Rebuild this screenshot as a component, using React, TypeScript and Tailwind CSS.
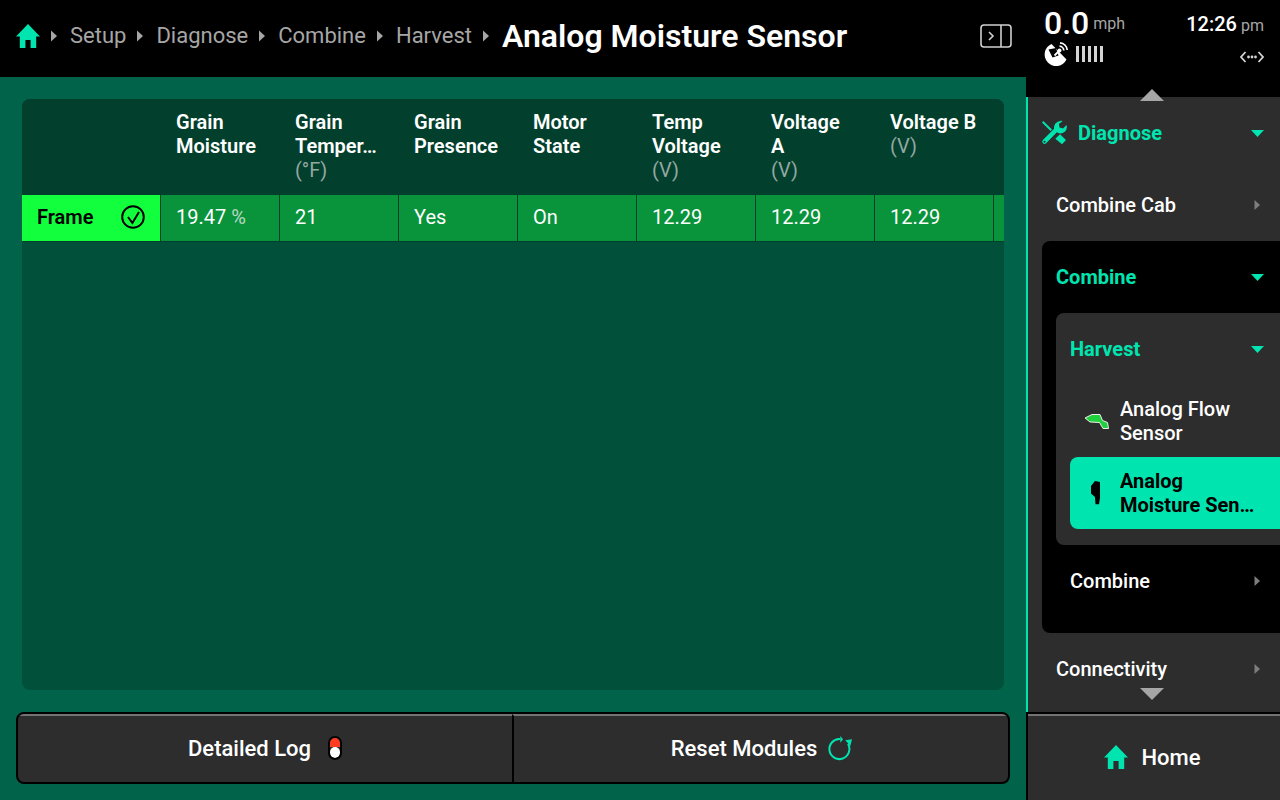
const TEAL = "#00e5b0";

function Caret() {
  return (
    <svg width="8" height="14" viewBox="0 0 8 14" className="shrink-0">
      <path d="M1 1.500 7 7l-6 5.500z" fill="#a6a6a6" />
    </svg>
  );
}

function HomeIcon({ size = 26 }: { size?: number }) {
  return (
    <svg width={size} height={size} viewBox="0 0 26 26">
      <path d="M13 1 25 13.500h-3.800V25h-5.600v-8h-5.200v8H4.800V13.500H1z" fill={TEAL} />
    </svg>
  );
}

function SideCaret() {
  return (
    <svg width="6" height="10" viewBox="0 0 6 10">
      <path d="M.5 0 6 5 .5 10z" fill="#7d7d7d" />
    </svg>
  );
}

function TealDown() {
  return (
    <svg width="13" height="7" viewBox="0 0 13 7">
      <path d="M0 0h13L6.500 7z" fill={TEAL} />
    </svg>
  );
}

const columns = [
  { title: ["Grain", "Moisture"], unit: "", value: "19.47", suffix: "%" },
  { title: ["Grain", "Temper…"], unit: "(°F)", value: "21", suffix: "" },
  { title: ["Grain", "Presence"], unit: "", value: "Yes", suffix: "" },
  { title: ["Motor", "State"], unit: "", value: "On", suffix: "" },
  { title: ["Temp", "Voltage"], unit: "(V)", value: "12.29", suffix: "" },
  { title: ["Voltage", "A"], unit: "(V)", value: "12.29", suffix: "" },
  { title: ["Voltage B"], unit: "(V)", value: "12.29", suffix: "" },
];

function Breadcrumbs() {
  return (
    <div className="flex h-[77px] items-center bg-black pb-[5px] pl-[15px] pr-[14px]">
      <div className="mr-[-1px]">
        <HomeIcon />
      </div>
      {["Setup", "Diagnose", "Combine", "Harvest"].map((label) => (
        <div key={label} className="flex items-center">
          <div className="ml-[10px] mr-[12px]">
            <Caret />
          </div>
          <span className="text-[22px] leading-none text-[#a6a6a6]">{label}</span>
        </div>
      ))}
      <div className="ml-[10px] mr-[12px]">
        <Caret />
      </div>
      <span className="text-[32px] font-semibold leading-none text-white">Analog Moisture Sensor</span>
      <svg width="32" height="24" viewBox="0 0 32 24" className="ml-auto">
        <rect x="1" y="1" width="30" height="22" rx="3" fill="none" stroke="#cfcfcf" strokeWidth="1.600" />
        <path d="M21 1v22" stroke="#cfcfcf" strokeWidth="1.600" />
        <path d="m9 8 4 4-4 4" fill="none" stroke="#cfcfcf" strokeWidth="1.600" />
      </svg>
    </div>
  );
}

function DataTable() {
  return (
    <div className="h-[591px] overflow-hidden rounded-lg bg-[#00503a]">
      <div className="flex h-[96px] bg-[#023f2d]">
        <div className="w-[139px] shrink-0" />
        {columns.map((col) => (
          <div key={col.title.join(" ")} className="w-[119px] shrink-0 pl-[15px] pt-[11px] text-[20px] leading-[24px]">
            {col.title.map((line) => (
              <div key={line} className="font-semibold text-white">{line}</div>
            ))}
            {col.unit && <div className="text-[#93a8a1]">{col.unit}</div>}
          </div>
        ))}
      </div>
      <div className="flex h-[47px] border-b border-[#023f2d]">
        <div className="flex w-[138px] shrink-0 items-center justify-between bg-[#12ff3e] pb-[2px] pl-[15px] pr-[15px]">
          <span className="text-[20px] font-semibold text-black">Frame</span>
          <svg width="24" height="24" viewBox="0 0 24 24">
            <circle cx="12" cy="12" r="10.800" fill="none" stroke="#000" strokeWidth="2" />
            <path d="m7 12 4.400 6L18 7" fill="none" stroke="#000" strokeWidth="2" />
          </svg>
        </div>
        {columns.map((col) => (
          <div key={col.title.join(" ")} className="flex w-[119px] shrink-0 items-center border-l border-[#023f2d] bg-[#09933b] pb-[2px] pl-[15px] text-[20px] text-white">
            {col.value}
            {col.suffix && <span className="ml-[5px] text-[#b9d8c4]">{col.suffix}</span>}
          </div>
        ))}
        <div className="flex-1 border-l border-[#023f2d] bg-[#09933b]" />
      </div>
    </div>
  );
}

function BottomButtons() {
  return (
    <div className="ml-[16px] mt-[22px] flex h-[72px] w-[994px] overflow-hidden rounded-lg border-2 border-black bg-[#2d2d2d]">
      <div className="flex w-[494px] items-center justify-center gap-[17px] border-t-2 border-[#737373] pb-[2px] text-[22px] font-medium text-white">
        <span>Detailed Log</span>
        <span className="flex h-[24px] w-[14px] flex-col overflow-hidden rounded-full border-2 border-black">
          <span className="h-[9px] bg-[#ff3b20]" />
          <span className="flex-1 rounded-full bg-white" />
        </span>
      </div>
      <div className="flex flex-1 items-center justify-center gap-[12px] border-l-2 border-t-2 border-black border-t-[#737373] pb-[2px] text-[22px] font-medium text-white">
        <span>Reset Modules</span>
        <svg width="22" height="25" viewBox="0 0 22 25" className="overflow-visible">
          <path d="M11 3.100A10 10 0 1 0 19 8" fill="none" stroke={TEAL} strokeWidth="2" />
          <path d="M11.300 0 14 3.300l-2.700 3.400zM16.300 4.300 23 3.300 21.300 10z" fill={TEAL} />
        </svg>
      </div>
    </div>
  );
}

function StatusPanel() {
  return (
    <div className="relative h-[97px] bg-black pl-[18px] pr-[16px] pt-[7px]">
      <div className="flex items-start justify-between">
        <div>
          <div className="flex items-start gap-[4px]">
            <span className="text-[32px] font-medium leading-[32px] text-white">0.0</span>
            <span className="mt-[9px] text-[16px] leading-[16px] text-[#a6a6a6]">mph</span>
          </div>
          <div className="mt-[3px] flex items-center gap-[8px]">
            <svg width="24" height="24" viewBox="0 0 24 24" className="overflow-visible">
              <path d="M7.500 2A11.500 11.500 0 1 0 22.500 17.500z" fill="#fff" />
              <path d="m4.500 7.500 7.500-1.500 2.500 7.500-6 2z" fill="#000" />
              <path d="m15 9-4.500 4.500" stroke="#fff" strokeWidth="1.800" />
              <circle cx="15.500" cy="8.500" r="2" fill="#fff" />
              <path d="M15.500 4.200a4.500 4.500 0 0 1 4.300 4.300M16 .8a8 8 0 0 1 7.200 7.200" fill="none" stroke="#fff" strokeWidth="1.700" />
            </svg>
            <div className="flex gap-[3px]">
              {[0, 1, 2, 3, 4].map((i) => (
                <span key={i} className="h-[16px] w-[3px] bg-[#d4d4d4]" />
              ))}
            </div>
          </div>
        </div>
        <div className="flex flex-col items-end">
          <div className="flex items-baseline gap-[4px] pt-[5px]">
            <span className="text-[20px] font-medium leading-[24px] text-white">12:26</span>
            <span className="text-[16px] leading-none text-[#a6a6a6]">pm</span>
          </div>
          <svg width="24" height="12" viewBox="0 0 24 12" className="mt-[15px]">
            <path d="M5.500 1 1 6l4.500 5M18.500 1 23 6l-4.500 5" fill="none" stroke="#d4d4d4" strokeWidth="1.800" />
            <circle cx="8.500" cy="6" r="1.400" fill="#d4d4d4" />
            <circle cx="12" cy="6" r="1.400" fill="#d4d4d4" />
            <circle cx="15.500" cy="6" r="1.400" fill="#d4d4d4" />
          </svg>
        </div>
      </div>
      <svg width="24" height="12" viewBox="0 0 24 12" className="absolute bottom-[-4px] left-[114px] z-10">
        <path d="M0 12 12 0l12 12z" fill="#a6a6a6" />
      </svg>
    </div>
  );
}

function Sidebar() {
  return (
    <div className="relative h-[615px] overflow-hidden border-l-2 border-[#00e5b0] bg-[#2d2d2d]">
      <div className="flex h-[72px] items-center pl-[13px] pr-[16px]">
        <svg width="26" height="26" viewBox="0 0 26 26">
          <path d="M2.300 1 11 9.500l-1.500 1.500L1 2.500z" fill={TEAL} />
          <path d="M19 14.300 25 20l-4 4.300-6.700-5.600z" fill={TEAL} />
          <path d="M3.500 21.700 16 9" stroke={TEAL} strokeWidth="4.500" strokeLinecap="round" />
          <path d="M19.500 1a6.500 6.500 0 0 0-6.300 8l3.800 4a6.500 6.500 0 0 0 8.500-8l-3.500 3.500-3.500-1-.6-3.500 3.700-3a6.500 6.500 0 0 0-2.100-.5z" fill={TEAL} />
          <circle cx="3.500" cy="21.700" r="1" fill="#2d2d2d" />
        </svg>
        <span className="ml-[11px] text-[20px] font-bold text-[#00e5b0]">Diagnose</span>
        <span className="ml-auto"><TealDown /></span>
      </div>
      <div className="flex h-[72px] items-center pl-[28px] pr-[20px] text-[20px] font-medium text-white">
        Combine Cab
        <span className="ml-auto"><SideCaret /></span>
      </div>
      <div className="ml-[14px] rounded-l-lg bg-black pl-[14px]">
        <div className="flex h-[72px] items-center pr-[16px] text-[20px] font-bold text-[#00e5b0]">
          Combine
          <span className="ml-auto"><TealDown /></span>
        </div>
        <div className="rounded-l-lg bg-[#2d2d2d] pb-[16px] pl-[14px]">
          <div className="flex h-[72px] items-center pr-[16px] text-[20px] font-bold text-[#00e5b0]">
            Harvest
            <span className="ml-auto"><TealDown /></span>
          </div>
          <div className="flex h-[72px] items-center text-[20px] font-medium leading-[24px] text-white">
            <svg width="24" height="16" viewBox="0 0 24 16" className="ml-[14px] mr-[12px] shrink-0 overflow-visible">
              <path d="M1 5 8 1.500h8l2.500 6 5 2 1 6H19l-3.500-6-9.500-.5z" fill="#1fd13c" stroke="#eeeeee" strokeWidth="1" />
            </svg>
            <span>Analog Flow<br />Sensor</span>
          </div>
          <div className="flex h-[72px] items-center rounded-l-lg bg-[#00e5b0] text-[20px] font-bold leading-[24px] text-black">
            <svg width="12" height="24" viewBox="0 0 12 24" className="ml-[20px] mr-[18px] shrink-0">
              <path d="M5 0l5 1v15.700l-1 6.600H5.500L5 16l-4-3.500V5z" fill="#000" />
            </svg>
            <span>Analog<br />Moisture Sen…</span>
          </div>
        </div>
        <div className="flex h-[72px] items-center pl-[14px] pr-[20px] text-[20px] font-medium text-white">
          Combine
          <span className="ml-auto"><SideCaret /></span>
        </div>
        <div className="h-[16px]" />
      </div>
      <div className="flex h-[72px] items-center pl-[28px] pr-[20px] text-[20px] font-medium text-white">
        Connectivity
        <span className="ml-auto"><SideCaret /></span>
      </div>
      <svg width="24" height="12" viewBox="0 0 24 12" className="absolute bottom-[12px] left-[112px]">
        <path d="M0 0h24L12 12z" fill="#a6a6a6" />
      </svg>
    </div>
  );
}

export default function App() {
  return (
    <div className="flex h-[800px] w-[1280px] overflow-hidden bg-black" style={{ fontFamily: "Roboto, sans-serif" }}>
      <div className="flex w-[1026px] shrink-0 flex-col">
        <Breadcrumbs />
        <div className="flex-1 bg-[#00634a] pt-[22px]">
          <div className="ml-[22px] w-[982px]">
            <DataTable />
          </div>
          <BottomButtons />
        </div>
      </div>
      <div className="flex flex-1 flex-col">
        <StatusPanel />
        <Sidebar />
        <div className="flex flex-1 items-center justify-center gap-[12px] border-l-2 border-t-2 border-black bg-[#2d2d2d] pr-[4px] shadow-[inset_0_2px_0_#737373] text-[22px] font-medium text-white">
          <HomeIcon size={26} />
          <span>Home</span>
        </div>
      </div>
    </div>
  );
}
